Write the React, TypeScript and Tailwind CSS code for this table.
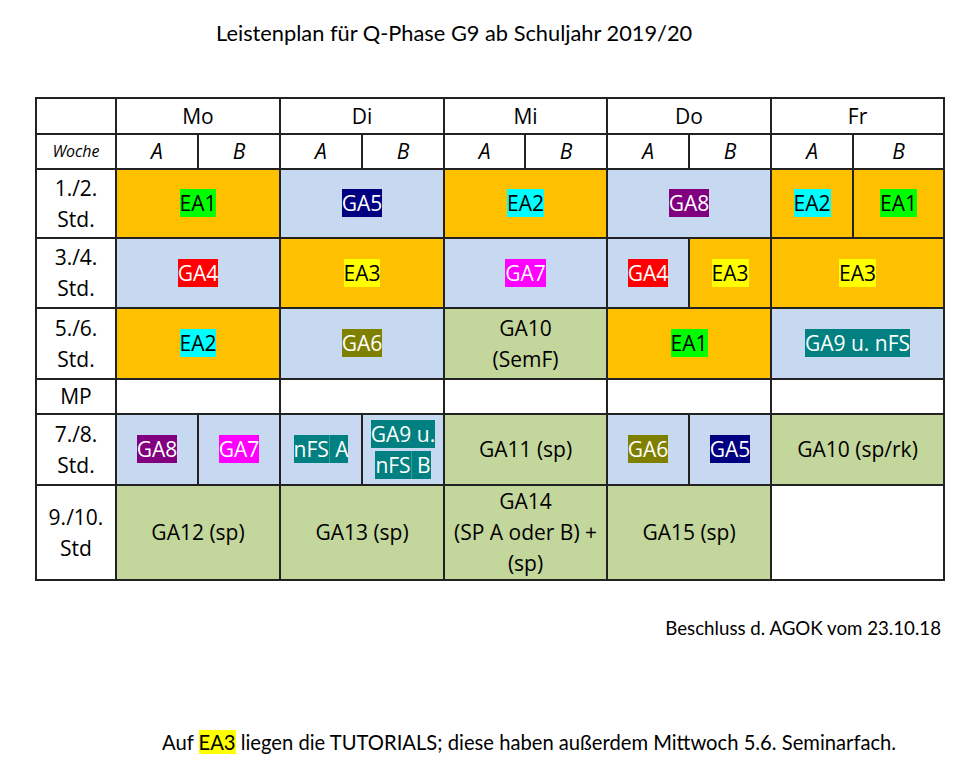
import React from "react";

const OR = "bg-[#ffc000]";
const BL = "bg-[#c6d9f1]";
const GR = "bg-[#c3d69b]";

function H({ c, children }: { c: string; children: React.ReactNode }) {
  return <span className={c}>{children}</span>;
}

const td = "border-2 border-[#222] text-center align-middle p-0";

export default function App() {
  return (
    <div className="w-[967px] h-[762px] bg-white text-black flex flex-col">
      <div className="pt-[18px] pl-[216px] text-[21.8px] leading-[30px] font-['Lato',sans-serif]">
        Leistenplan für Q-Phase G9 ab Schuljahr 2019/20
      </div>
      <div className="mt-[49px] pl-[35px]">
        <table className="table-fixed border-collapse w-[908px] font-['Open_Sans',sans-serif] text-[21px] leading-[31px]">
          <colgroup>
            <col className="w-[80px]" />
            <col className="w-[82px]" />
            <col className="w-[82px]" />
            <col className="w-[82px]" />
            <col className="w-[82px]" />
            <col className="w-[81px]" />
            <col className="w-[82px]" />
            <col className="w-[82px]" />
            <col className="w-[82px]" />
            <col className="w-[82px]" />
            <col className="w-[91px]" />
          </colgroup>
          <tbody>
            <tr className="h-[36px]">
              <td className={td}></td>
              <td className={td} colSpan={2}>Mo</td>
              <td className={td} colSpan={2}>Di</td>
              <td className={td} colSpan={2}>Mi</td>
              <td className={td} colSpan={2}>Do</td>
              <td className={td} colSpan={2}>Fr</td>
            </tr>
            <tr className="h-[35px] italic">
              <td className={`${td} text-[16px]`}>Woche</td>
              {["A", "B", "A", "B", "A", "B", "A", "B", "A", "B"].map((l, i) => (
                <td key={i} className={td}>{l}</td>
              ))}
            </tr>
            <tr className="h-[69px]">
              <td className={td}>1./2.<br />Std.</td>
              <td className={`${td} ${OR}`} colSpan={2}><H c="bg-[#00ff00]">EA1</H></td>
              <td className={`${td} ${BL}`} colSpan={2}><H c="bg-[#000080] text-white">GA5</H></td>
              <td className={`${td} ${OR}`} colSpan={2}><H c="bg-[#00ffff]">EA2</H></td>
              <td className={`${td} ${BL}`} colSpan={2}><H c="bg-[#800080] text-white">GA8</H></td>
              <td className={`${td} ${OR}`}><H c="bg-[#00ffff]">EA2</H></td>
              <td className={`${td} ${OR}`}><H c="bg-[#00ff00]">EA1</H></td>
            </tr>
            <tr className="h-[70px]">
              <td className={td}>3./4.<br />Std.</td>
              <td className={`${td} ${BL}`} colSpan={2}><H c="bg-[#ff0000] text-white">GA4</H></td>
              <td className={`${td} ${OR}`} colSpan={2}><H c="bg-[#ffff00]">EA3</H></td>
              <td className={`${td} ${BL}`} colSpan={2}><H c="bg-[#ff00ff] text-white">GA7</H></td>
              <td className={`${td} ${BL}`}><H c="bg-[#ff0000] text-white">GA4</H></td>
              <td className={`${td} ${OR}`}><H c="bg-[#ffff00]">EA3</H></td>
              <td className={`${td} ${OR}`} colSpan={2}><H c="bg-[#ffff00]">EA3</H></td>
            </tr>
            <tr className="h-[71px]">
              <td className={td}>5./6.<br />Std.</td>
              <td className={`${td} ${OR}`} colSpan={2}><H c="bg-[#00ffff]">EA2</H></td>
              <td className={`${td} ${BL}`} colSpan={2}><H c="bg-[#808000] text-white">GA6</H></td>
              <td className={`${td} ${GR}`} colSpan={2}>GA10<br />(SemF)</td>
              <td className={`${td} ${OR}`} colSpan={2}><H c="bg-[#00ff00]">EA1</H></td>
              <td className={`${td} ${BL}`} colSpan={2}><H c="bg-[#008080] text-white">GA9 u. nFS</H></td>
            </tr>
            <tr className="h-[35px]">
              <td className={td}>MP</td>
              <td className={td} colSpan={2}></td>
              <td className={td} colSpan={2}></td>
              <td className={td} colSpan={2}></td>
              <td className={td} colSpan={2}></td>
              <td className={td} colSpan={2}></td>
            </tr>
            <tr className="h-[71px]">
              <td className={td}>7./8.<br />Std.</td>
              <td className={`${td} ${BL}`}><H c="bg-[#800080] text-white">GA8</H></td>
              <td className={`${td} ${BL}`}><H c="bg-[#ff00ff] text-white">GA7</H></td>
              <td className={`${td} ${BL}`}>
                <span className="bg-[#008080] text-white">nFS</span>
                <span className="bg-[#008080] text-white border-l border-[#3a9a9a]">&nbsp;A</span>
              </td>
              <td className={`${td} ${BL}`}>
                <span className="bg-[#008080] text-white">GA9 u.</span>
                <br />
                <span className="bg-[#008080] text-white">nFS</span>
                <span className="bg-[#008080] text-white border-l border-[#3a9a9a]">&nbsp;B</span>
              </td>
              <td className={`${td} ${GR}`} colSpan={2}>GA11 (sp)</td>
              <td className={`${td} ${BL}`}><H c="bg-[#808000] text-white">GA6</H></td>
              <td className={`${td} ${BL}`}><H c="bg-[#000080] text-white">GA5</H></td>
              <td className={`${td} ${GR}`} colSpan={2}>GA10 (sp/rk)</td>
            </tr>
            <tr className="h-[93px]">
              <td className={td}>9./10.<br />Std</td>
              <td className={`${td} ${GR}`} colSpan={2}>GA12 (sp)</td>
              <td className={`${td} ${GR}`} colSpan={2}>GA13 (sp)</td>
              <td className={`${td} ${GR}`} colSpan={2}>GA14<br />(SP A oder B) +<br />(sp)</td>
              <td className={`${td} ${GR}`} colSpan={2}>GA15 (sp)</td>
              <td className={td} colSpan={2}></td>
            </tr>
          </tbody>
        </table>
      </div>
      <div className="mt-[34px] pr-[26px] text-right text-[18.7px] leading-[26px] font-['Lato',sans-serif]">
        Beschluss d. AGOK vom 23.10.18
      </div>
      <div className="mt-[88px] pl-[162px] text-[20.2px] leading-[26px] font-['Lato',sans-serif]">
        Auf <span className="bg-[#ffff00]">EA3</span> liegen die TUTORIALS; diese haben außerdem Mittwoch 5.6. Seminarfach.
      </div>
    </div>
  );
}
